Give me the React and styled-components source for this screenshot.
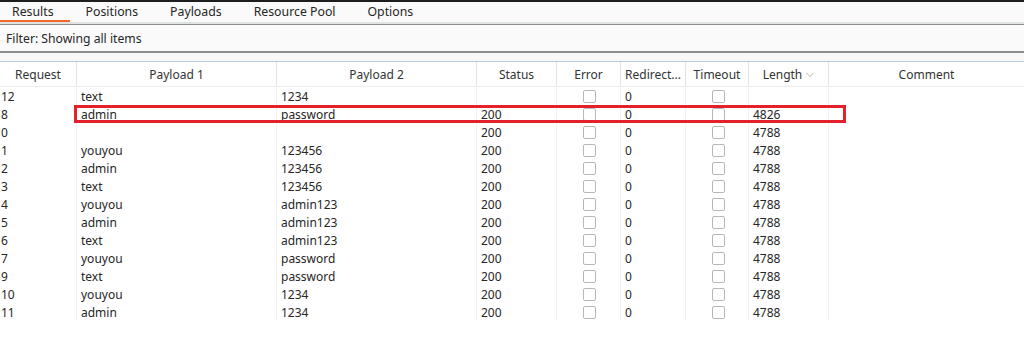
import React from 'react';
import styled, { createGlobalStyle } from 'styled-components';

const GlobalStyle = createGlobalStyle`
  body {
    margin: 0;
    background: #ffffff;
    font-family: 'Noto Sans', 'Liberation Sans', sans-serif;
    font-size: 12px;
    color: #262626;
  }
`;

const Page = styled.div`
  width: 1024px;
  height: 339px;
  overflow: hidden;
  background: #ffffff;
`;

const TopEdge = styled.div`
  height: 2px;
  background: #1e1e1e;
`;

const TabBar = styled.div`
  display: flex;
  height: 20px;
  background: #fafafa;
  border-bottom: 2px solid #dfe3e1;
`;

const Tab = styled.div`
  display: flex;
  align-items: center;
  padding: 1px 16px 0 ${(p) => (p.active ? '12px' : '16px')};
  height: 100%;
  box-sizing: border-box;
  font-size: 12.3px;
  color: #262626;
  border-bottom: 2px solid ${(p) => (p.active ? '#f06a2c' : 'transparent')};
`;

const FilterBar = styled.div`
  display: flex;
  align-items: center;
  height: 29px;
  padding: 1px 6px 0;
  box-sizing: border-box;
  background: #fafafa;
  border-top: 1px solid #8e8e8e;
  border-bottom: 2px solid #8e8e8e;
  font-size: 12.2px;
`;

const Spacer = styled.div`
  height: 8px;
  background: #f8f8f8;
  border-bottom: 1px solid #b9cde0;
`;

const cols = '77px 200px 200px 80px 64px 65px 63px 80px 1fr';

const HeaderRow = styled.div`
  display: grid;
  grid-template-columns: ${cols};
  height: 24px;
  border-bottom: 1px solid #ececec;
`;

const HeaderCell = styled.div`
  display: flex;
  align-items: center;
  justify-content: center;
  gap: 4px;
  color: #333333;
  border-right: ${(p) => (p.last ? 'none' : '1px solid #e2e2e2')};
  white-space: nowrap;
  overflow: hidden;
`;

const SortMark = styled.svg`
  width: 8px;
  height: 6px;
  margin-top: 1px;
`;

const Body = styled.div`
  display: flex;
  flex-direction: column;
`;

const Row = styled.div`
  position: relative;
  display: grid;
  grid-template-columns: ${cols};
  height: 18px;
`;

const Cell = styled.div`
  display: flex;
  align-items: center;
  justify-content: ${(p) => (p.center ? 'center' : 'flex-start')};
  padding: ${(p) => (p.center ? '0 0 0 2px' : p.first ? '0 0 0 1px' : '0 0 0 4px')};
  border-right: ${(p) => (p.last ? 'none' : '1px solid #f1f1f1')};
  white-space: nowrap;
  color: #262626;
`;

const Check = styled.span`
  display: block;
  width: 13px;
  height: 13px;
  box-sizing: border-box;
  border: 1px solid #b7b7b7;
  border-radius: 2px;
  background: #ffffff;
`;

const Highlight = styled.div`
  position: absolute;
  left: 74px;
  top: 0;
  width: 772px;
  height: 18px;
  box-sizing: border-box;
  border: 3px solid #e3202b;
  pointer-events: none;
`;

const tabs = ['Results', 'Positions', 'Payloads', 'Resource Pool', 'Options'];

const headers = ['Request', 'Payload 1', 'Payload 2', 'Status', 'Error', 'Redirect...', 'Timeout', 'Length', 'Comment'];

const rows = [
  ['12', 'text', '1234', '', '0', ''],
  ['8', 'admin', 'password', '200', '0', '4826'],
  ['0', '', '', '200', '0', '4788'],
  ['1', 'youyou', '123456', '200', '0', '4788'],
  ['2', 'admin', '123456', '200', '0', '4788'],
  ['3', 'text', '123456', '200', '0', '4788'],
  ['4', 'youyou', 'admin123', '200', '0', '4788'],
  ['5', 'admin', 'admin123', '200', '0', '4788'],
  ['6', 'text', 'admin123', '200', '0', '4788'],
  ['7', 'youyou', 'password', '200', '0', '4788'],
  ['9', 'text', 'password', '200', '0', '4788'],
  ['10', 'youyou', '1234', '200', '0', '4788'],
  ['11', 'admin', '1234', '200', '0', '4788'],
];

function App() {
  return (
    <Page>
      <GlobalStyle />
      <TopEdge />
      <TabBar>
        {tabs.map((t, i) => (
          <Tab key={t} active={i === 0}>
            {t}
          </Tab>
        ))}
      </TabBar>
      <FilterBar>Filter: Showing all items</FilterBar>
      <Spacer />
      <HeaderRow>
        {headers.map((h, i) => (
          <HeaderCell key={h} last={i === headers.length - 1}>
            {h}
            {h === 'Length' && (
              <SortMark viewBox="0 0 8 6">
                <path d="M0.5 0.8 L4 4.8 L7.5 0.8" fill="none" stroke="#b8b8b8" strokeWidth="1" />
              </SortMark>
            )}
          </HeaderCell>
        ))}
      </HeaderRow>
      <Body>
        {rows.map((r, idx) => (
          <Row key={r[0]}>
            <Cell first>{r[0]}</Cell>
            <Cell>{r[1]}</Cell>
            <Cell>{r[2]}</Cell>
            <Cell>{r[3]}</Cell>
            <Cell center>
              <Check />
            </Cell>
            <Cell>{r[4]}</Cell>
            <Cell center>
              <Check />
            </Cell>
            <Cell>{r[5]}</Cell>
            <Cell last />
            {idx === 1 && <Highlight />}
          </Row>
        ))}
      </Body>
    </Page>
  );
}

export default App;
